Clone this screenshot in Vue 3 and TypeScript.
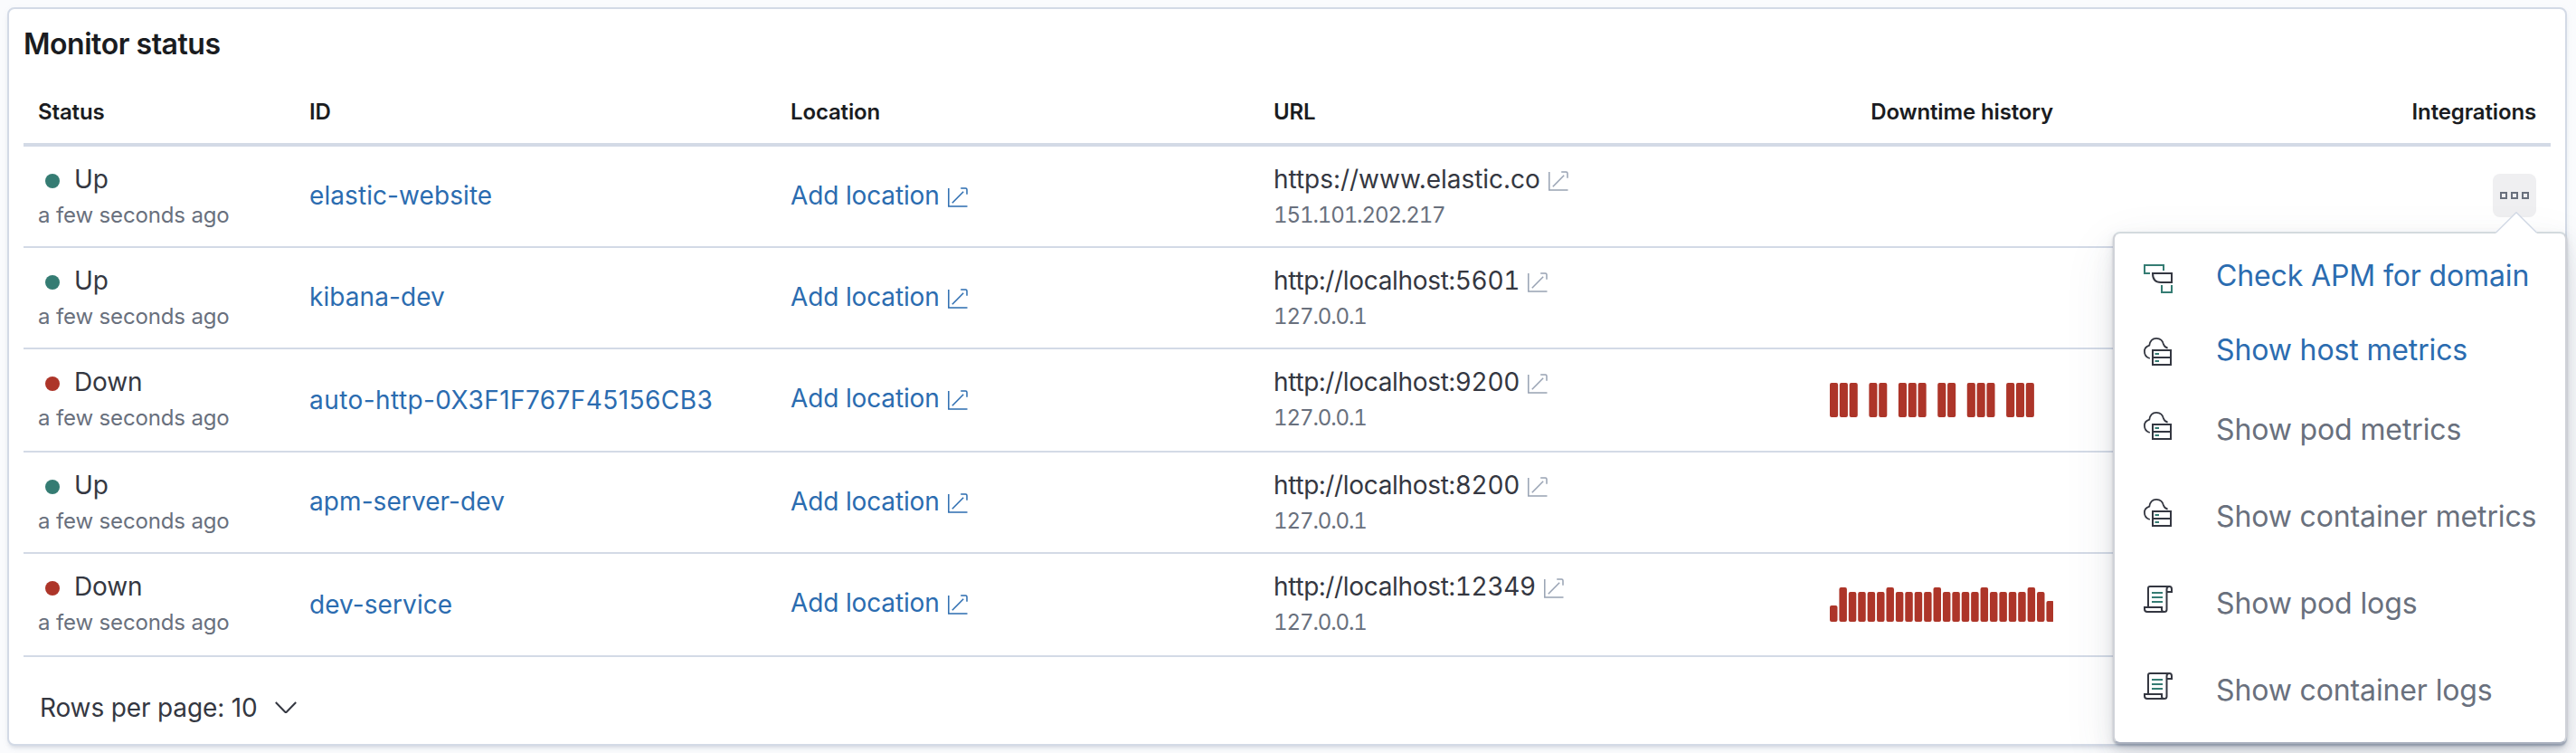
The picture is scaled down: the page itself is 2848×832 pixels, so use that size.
<script setup lang="ts">
type MenuIcon = 'apm' | 'metrics' | 'logs'

interface Monitor {
  id: string
  up: boolean
  url: string
  ip: string
  chart?: 'gaps' | 'dense'
  tall?: boolean
}

interface Bar {
  x: number
  h: number
}

interface MenuItem {
  label: string
  icon: MenuIcon
  enabled: boolean
}

const monitors: Monitor[] = [
  { id: 'elastic-website', up: true, url: 'https://www.elastic.co', ip: '151.101.202.217' },
  { id: 'kibana-dev', up: true, url: 'http://localhost:5601', ip: '127.0.0.1' },
  { id: 'auto-http-0X3F1F767F45156CB3', up: false, url: 'http://localhost:9200', ip: '127.0.0.1', chart: 'gaps', tall: true },
  { id: 'apm-server-dev', up: true, url: 'http://localhost:8200', ip: '127.0.0.1' },
  { id: 'dev-service', up: false, url: 'http://localhost:12349', ip: '127.0.0.1', chart: 'dense', tall: true },
]

const hasDigits = (text: string): boolean => /\d/.test(text)

const gapBars: Bar[] = [0, 1, 2, 4, 5, 7, 8, 9, 11, 12, 14, 15, 16, 18, 19, 20].map((i) => ({
  x: 1 + i * 10.84,
  h: 38,
}))

const denseBars: Bar[] = Array.from({ length: 24 }, (_, i) => ({
  x: 1 + i * 10.41,
  h: i === 0 ? 18 : i === 23 ? 23 : i % 5 === 1 ? 38 : 33,
}))

const menu: MenuItem[] = [
  { label: 'Check APM for domain', icon: 'apm', enabled: true },
  { label: 'Show host metrics', icon: 'metrics', enabled: true },
  { label: 'Show pod metrics', icon: 'metrics', enabled: false },
  { label: 'Show container metrics', icon: 'metrics', enabled: false },
  { label: 'Show pod logs', icon: 'logs', enabled: false },
  { label: 'Show container logs', icon: 'logs', enabled: false },
]
</script>

<template>
  <main class="page">
    <section class="panel">
      <h2 class="title">Monitor status</h2>

      <div class="row head">
        <div class="cell">Status</div>
        <div class="cell">ID</div>
        <div class="cell">Location</div>
        <div class="cell">URL</div>
        <div class="cell end">Downtime history</div>
        <div class="cell end">Integrations</div>
      </div>

      <div v-for="(m, index) in monitors" :key="m.id" class="row body" :class="{ tall: m.tall }">
        <div class="cell stack">
          <div class="health">
            <span class="dot-box"><span class="dot" :class="m.up ? 'up' : 'down'"></span></span>
            <span>{{ m.up ? 'Up' : 'Down' }}</span>
          </div>
          <div class="sub">a few seconds ago</div>
        </div>
        <div class="cell mid"><a class="link name" :class="{ numeric: hasDigits(m.id) }">{{ m.id }}</a></div>
        <div class="cell place">
          <a class="link">Add location</a>
          <svg class="pop link-icon" viewBox="0 0 22 22">
            <path d="M.8 1v20H21.5M14.2 1h5.3q1.5 0 1.5 1.5v5.3M4.8 17.2L17.2 4.8" />
          </svg>
        </div>
        <div class="cell stack">
          <div class="url">
            <span class="address" :class="{ numeric: hasDigits(m.url) }">{{ m.url }}</span>
            <svg class="pop muted-icon" viewBox="0 0 22 22">
              <path d="M.8 1v20H21.5M14.2 1h5.3q1.5 0 1.5 1.5v5.3M4.8 17.2L17.2 4.8" />
            </svg>
          </div>
          <div class="sub ip">{{ m.ip }}</div>
        </div>
        <div class="cell chart-cell">
          <svg v-if="m.chart" class="chart" viewBox="0 0 248 38">
            <rect
              v-for="(b, i) in m.chart === 'gaps' ? gapBars : denseBars"
              :key="i"
              :x="b.x"
              :y="38 - b.h"
              :width="m.chart === 'gaps' ? 9.1 : 8.5"
              :height="b.h"
              rx="2"
            />
          </svg>
        </div>
        <div class="cell actions">
          <div v-if="index === 0" class="anchor">
            <button class="more" type="button" aria-label="Integrations">
              <svg width="32" height="8" viewBox="0 0 32 8">
                <rect x="1" y="1" width="6" height="6" />
                <rect x="13" y="1" width="6" height="6" />
                <rect x="25" y="1" width="6" height="6" />
              </svg>
            </button>
            <div class="popover">
              <svg class="arrow" width="46" height="24" viewBox="0 0 46 24">
                <path class="arrow-fill" d="M0 24L23 1L46 24z" />
                <path class="arrow-line" d="M.5 23L23 .8L45.5 23" />
              </svg>
              <div v-for="item in menu" :key="item.label" class="item" :class="{ enabled: item.enabled }">
                <svg v-if="item.icon === 'apm'" class="glyph apm" viewBox="0 0 32 32">
                  <path class="teal" d="M7 10H1V1H22V7M20 23V31H31V23" />
                  <path class="ink" d="M10 10H31V20H19Q10 20 10 10z" />
                </svg>
                <svg v-else-if="item.icon === 'metrics'" class="glyph" viewBox="0 0 32 32">
                  <path class="ink thin" d="M6.800 24C3 22.800 .9 19.800 .9 16.200C.9 13.200 3 10.700 6.300 9.600C7 4.800 10 1.800 14 1.800C18.200 1.800 21.200 4.500 22 8.600C22.600 10.600 24.300 12 26.600 12.700" />
                  <path class="ink" d="M10 15H30V31H10zM10 23H30" />
                  <path class="teal" d="M12.500 19H17M12.500 27H17" />
                </svg>
                <svg v-else class="glyph" viewBox="0 0 32 32">
                  <path class="ink" d="M5 24V4Q5 2 7 2H28.500Q31 2 31 5V8H25.500V27.500Q25.500 30 22.800 30H4Q1 30 1 27V25H20V27.500Q20 30 22.800 30M25.500 8V5Q25.500 2 28.500 2" />
                  <path class="teal" d="M9 9H21M9 14H21M9 19H21" />
                </svg>
                <span class="label">{{ item.label }}</span>
              </div>
            </div>
          </div>
        </div>
      </div>

      <div class="pager">
        <span>Rows per page: 10</span>
        <svg width="24" height="14" viewBox="0 0 24 14">
          <path d="M.8 1L11 11.500Q12 12.500 13 11.500L23.200 1" />
        </svg>
      </div>
    </section>
  </main>
</template>

<style>
body {
  margin: 0;
  background: #fafbfd;
}
</style>

<style scoped>
.page {
  box-sizing: border-box;
  width: 2848px;
  height: 832px;
  padding: 8px 10px 8px 8px;
  overflow: hidden;
  font-family: Inter, 'Liberation Sans', sans-serif;
  font-size: 28px;
  line-height: 42px;
  letter-spacing: -0.005em;
  color: #343741;
}
.panel {
  box-sizing: border-box;
  height: 816px;
  padding: 0 16px;
  background: #fff;
  border: 2px solid #d3dae6;
  border-radius: 8px;
  box-shadow: 0 4px 4px -2px rgba(152, 162, 179, 0.3), 0 2px 10px -4px rgba(152, 162, 179, 0.3);
}
.title {
  box-sizing: border-box;
  height: 76px;
  margin: 0;
  padding-top: 19px;
  font-size: 32px;
  line-height: 40px;
  font-weight: 600;
  letter-spacing: -0.46px;
  color: #1a1c21;
}
.row {
  display: grid;
  grid-template-columns: 300px 532px 534px 534px 360px 534px;
  box-sizing: border-box;
  border-bottom: 2px solid #d3dae6;
}
.cell {
  padding: 0 16px;
  min-width: 0;
  white-space: nowrap;
}
.head {
  height: 76px;
  border-bottom-width: 4px;
  font-size: 24px;
  line-height: 36px;
  font-weight: 600;
  color: #1a1c21;
}
.head .cell {
  padding-top: 20px;
}
.end {
  text-align: right;
}
.body {
  height: 112px;
}
.tall {
  height: 114px;
}
.stack {
  padding-top: 15px;
}
.health,
.url {
  display: flex;
  align-items: center;
  height: 42px;
}
.dot-box {
  display: flex;
  align-items: center;
  justify-content: center;
  width: 32px;
  height: 32px;
  margin: 4px 8px 0 0;
}
.dot {
  width: 16px;
  height: 16px;
  border-radius: 50%;
}
.up {
  background: #357c73;
}
.down {
  background: #ad3529;
}
.sub {
  margin-top: 1px;
  font-size: 24px;
  line-height: 36px;
  color: #69707d;
}
.ip {
  font-variant-numeric: tabular-nums;
  letter-spacing: -1.1px;
}
.address {
  letter-spacing: -0.03px;
}
.address.numeric {
  font-variant-numeric: tabular-nums;
  letter-spacing: -0.32px;
}
.mid {
  padding-top: 33px;
}
.tall .mid {
  padding-top: 35px;
}
.link {
  color: #2b6cb0;
}
.name {
  letter-spacing: 0.08px;
}
.name.numeric {
  letter-spacing: 0.43px;
}
.place {
  display: flex;
  align-items: center;
  height: 42px;
  padding-top: 33px;
}
.pop {
  width: 22px;
  height: 22px;
  margin: 4px 0 0 9px;
  fill: none;
  stroke-width: 1.5;
}
.link-icon {
  stroke: #2b6cb0;
}
.muted-icon {
  stroke: #98a2b3;
}
.chart-cell {
  display: flex;
  justify-content: flex-end;
  padding-top: 37px;
}
.chart {
  width: 248px;
  height: 38px;
  fill: #ad3529;
}
.actions {
  display: flex;
  justify-content: flex-end;
  padding-top: 30px;
}
.anchor {
  position: relative;
  width: 48px;
  height: 48px;
}
.more {
  display: flex;
  align-items: center;
  justify-content: center;
  width: 48px;
  height: 48px;
  padding: 0;
  border: 0;
  border-radius: 8px;
  background: #efeff1;
}
.more rect {
  fill: none;
  stroke: #69707d;
  stroke-width: 2;
}
.popover {
  position: absolute;
  z-index: 2;
  top: 64px;
  right: -34px;
  box-sizing: border-box;
  width: 502px;
  height: 566px;
  padding: 22px 32px;
  background: #fff;
  border: 2px solid #d3dae6;
  border-color: #d3dade #cfd2d8 #a8afbd;
  border-radius: 8px;
  box-shadow:
    0 20px 56px rgba(65, 78, 101, 0.1),
    0 12px 24px rgba(65, 78, 101, 0.1),
    0 4px 8px rgba(65, 78, 101, 0.1),
    0 2px 2px rgba(65, 78, 101, 0.3);
}
.arrow {
  position: absolute;
  top: -24px;
  right: 31px;
}
.arrow-fill {
  fill: #fff;
}
.arrow-line {
  fill: none;
  stroke: #d3dae6;
  stroke-width: 1.5;
}
.item {
  display: flex;
  align-items: flex-start;
  height: 96px;
  font-size: 32px;
  line-height: 48px;
  letter-spacing: -0.13px;
  color: #69707d;
}
.item.enabled {
  height: 82px;
  color: #2b6cb0;
}
.glyph {
  flex: none;
  width: 32px;
  height: 32px;
  margin: 10px 48px 0 0;
  fill: none;
  stroke-width: 2;
}
.apm {
  margin-top: 12px;
}
.label {
  margin-top: 1px;
  white-space: nowrap;
}
.item:not(.enabled) .label {
  margin-top: 7px;
}
.ink {
  stroke: #343741;
}
.thin {
  stroke-width: 1.8;
}
.teal {
  stroke: #357c73;
}
.pager {
  display: flex;
  align-items: center;
  gap: 19px;
  padding: 35px 0 0 18px;
}
.pager path {
  fill: none;
  stroke: #343741;
  stroke-width: 2;
}
</style>
